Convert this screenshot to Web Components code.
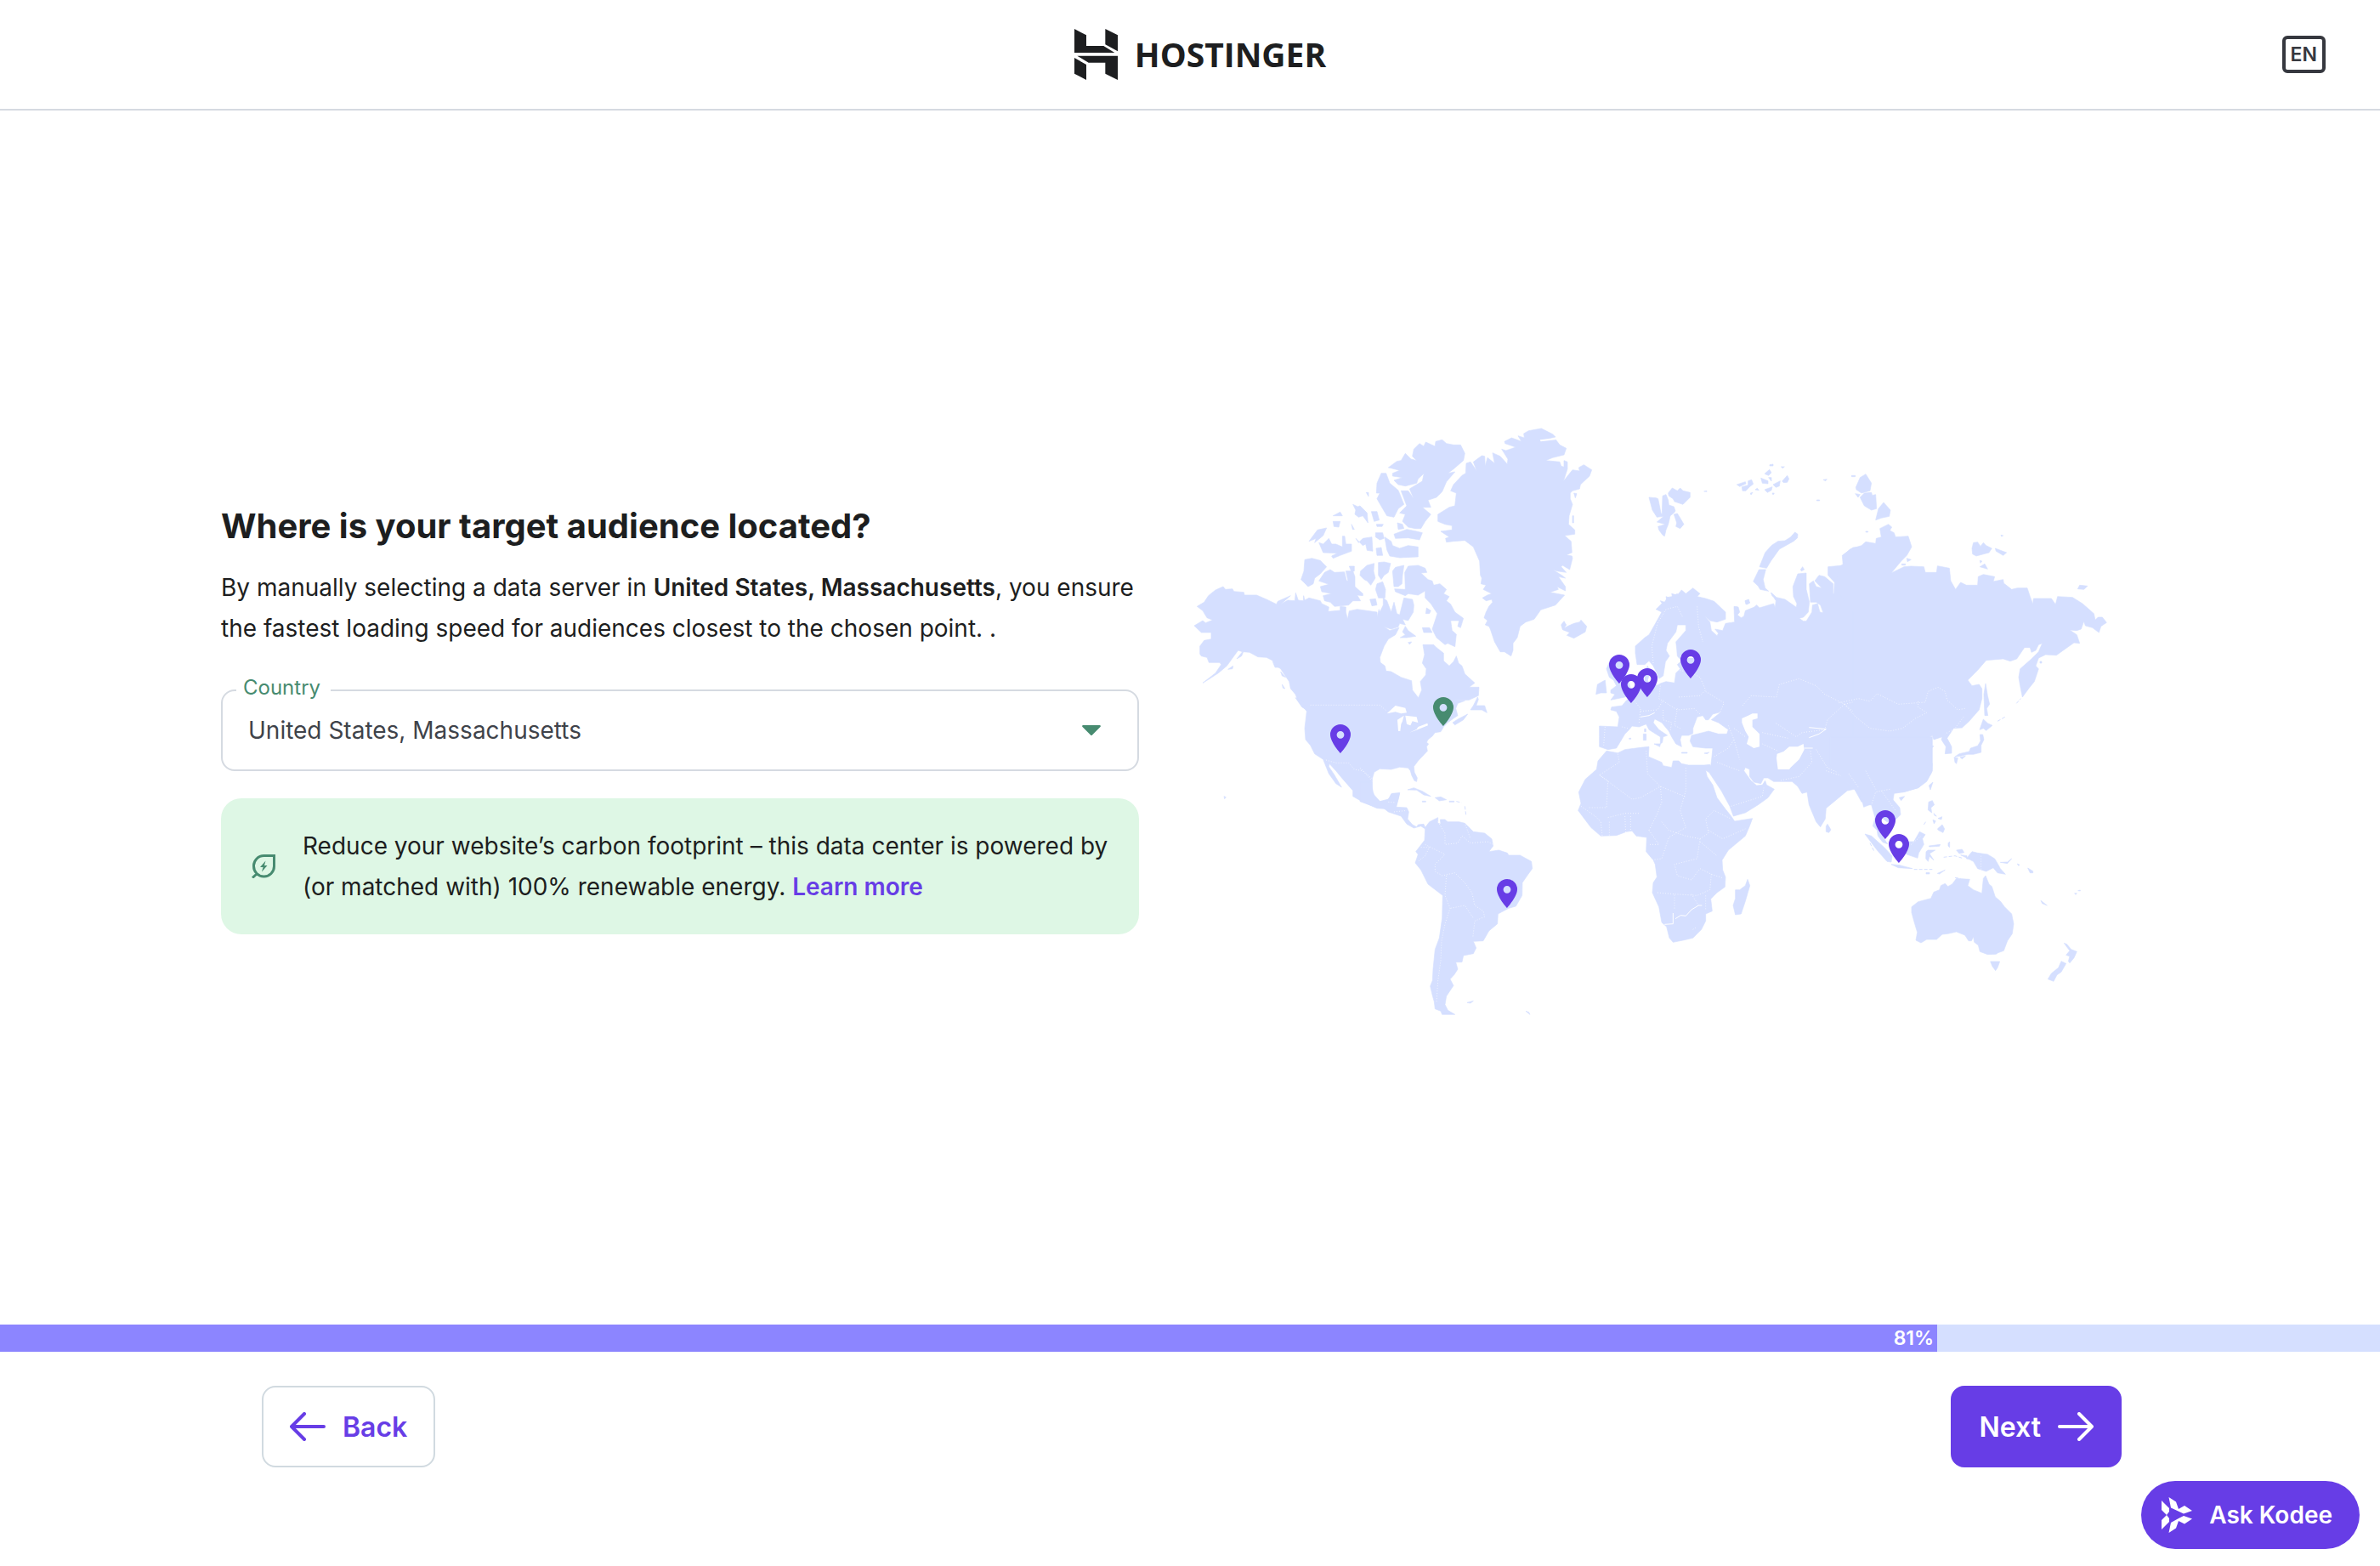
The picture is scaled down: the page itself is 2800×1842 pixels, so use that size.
<!DOCTYPE html>
<html lang="en">
<head>
<meta charset="utf-8">
<title>Hostinger</title>
<style>
  html, body { margin: 0; height: 100%; }
  body { font-family: Inter, sans-serif; color: #1d1e20; background: #fff; }
</style>
</head>
<body>
<setup-page></setup-page>

<template id="site-header">
  <style>
    :host { display: grid; grid-template-columns: 1fr auto 1fr; align-items: center; box-sizing: border-box; height: 130px; padding: 0 64px; border-bottom: 2px solid #d5dae1; }
    .logo { grid-column: 2; display: flex; align-items: center; gap: 20px; margin-left: 24px; color: #1d1e20; text-decoration: none; font: 700 39px/48px "Open Sans", sans-serif; }
    .logo svg { width: 51px; height: 60px; fill: currentColor; display: block; }
    button { justify-self: end; box-sizing: border-box; height: 44px; padding: 0 6px; border: 4px solid #36383f; border-radius: 6px; background: none; color: #36383f; font: 600 23px/36px Inter, sans-serif; }
  </style>
  <a class="logo" href="#">
    <svg viewBox="72 102 153 180" aria-hidden="true"><path d="M72 102L114 124V162H175L214 186H72zM181 102L225 124V181L181 157zM82 197H225V282L181 260V221H122zM72 204L114 228V282L72 260z"/></svg>
    <span>HOSTINGER</span>
  </a>
  <button type="button">EN</button>
</template>

<template id="country-select">
  <style>
    :host { display: block; position: relative; }
    label { position: absolute; left: 18px; top: -20px; padding: 0 12px 0 8px; background: #fff; color: #478b70; font-size: 24px; line-height: 36px; }
    select { display: block; width: 100%; height: 96px; box-sizing: border-box; appearance: none; border: 2px solid #d5dae1; border-radius: 16px; padding: 0 80px 0 30px; background: none; color: #3f434a; font: inherit; font-size: 28px; }
    svg { position: absolute; right: 45px; top: 42px; width: 22px; height: 12px; fill: #478b70; pointer-events: none; }
  </style>
  <label for="country">Country</label>
  <select id="country"><option>United States, Massachusetts</option></select>
  <svg viewBox="0 0 22 12" aria-hidden="true"><path d="M1 0H21Q22.500 .8 21.500 2L12 11.500Q11 12.500 10 11.500L.5 2Q-.5 .8 1 0z"/></svg>
</template>

<template id="eco-note">
  <style>
    :host { display: flex; align-items: center; gap: 32px; padding: 32px 24px 32px 36px; border-radius: 24px; background: #def7e5; font-size: 28px; line-height: 48px; }
    svg { flex: none; width: 28px; height: 28px; fill: none; stroke: #478b70; stroke-width: 3; }
    ::slotted(a) { color: #673de6; font-weight: 600; text-decoration: none; }
  </style>
  <svg viewBox="0 0 28 28" aria-hidden="true"><path d="M26.500 1.500V14A12 12 0 0 1 14.500 26A12 12 0 0 1 2.500 14A12 12 0 0 1 14.500 1.500zM1 27.500L6.500 22.500"/><path d="M16.500 7.500L10 15H13.500L12 20.500L18.500 13H15z" fill="#478b70" stroke="none"/></svg>
  <div><slot></slot></div>
</template>

<template id="audience-form">
  <style>
    :host { display: flex; flex-direction: column; }
    h1 { margin: 0 0 18px; font-size: 40px; line-height: 60px; font-weight: 700; }
    p { margin: 0 0 48px; font-size: 28px; line-height: 48px; }
    b { font-weight: 600; }
    country-select { margin-bottom: 32px; }
  </style>
  <h1>Where is your target audience located?</h1>
  <p>By manually selecting a data server in <b>United States, Massachusetts</b>, you ensure the fastest loading speed for audiences closest to the chosen point. .</p>
  <country-select></country-select>
  <eco-note>Reduce your website’s carbon footprint – this data center is powered by (or matched with) 100% renewable energy. <a href="#">Learn more</a></eco-note>
</template>

<template id="map-pin">
  <style>
    :host { position: absolute; transform: translate(-50%, -100%); color: #673de6; }
    :host([selected]) { color: #478b70; }
    button { display: block; padding: 0; border: 0; background: none; color: inherit; }
    svg { display: block; width: 24px; height: 34px; fill: currentColor; }
  </style>
  <button type="button"><svg viewBox="0 0 24 34" aria-hidden="true"><path fill-rule="evenodd" d="M12 0A12 12 0 0 0 0 12C0 21 12 34 12 34S24 21 24 12A12 12 0 0 0 12 0zM12 7.900A4.400 4.400 0 1 1 12 16.700A4.400 4.400 0 1 1 12 7.900z"/></svg></button>
</template>

<template id="world-map">
  <style>
    :host { display: block; position: relative; }
    .map { display: block; width: 100%; height: auto; }
    .land { fill: #d5dfff; stroke: #d5dfff; stroke-width: 2; stroke-linejoin: round; }
    .water { fill: #fff; stroke: none; }
    .river { fill: none; stroke: #fff; stroke-width: 3; }
    .border { fill: none; stroke: #fff; stroke-width: 2; stroke-dasharray: 3 6; }
    .chain { fill: none; stroke-width: 3; stroke-dasharray: 12 6; }
  </style>
  <svg class="map" viewBox="1400 500 1080 700" role="img">
    <!-- North America and Greenland -->
    <g class="land" transform="translate(1390 490) scale(.33333)">
      <path d="M55 670L80 655L95 632L120 612L147 600L155 610L180 608L185 617L220 620L222 630L265 630L300 645L335 662L340 652L385 632L350 662L375 648L400 650L403 622L412 648L430 650L431 632L435 648L450 640L490 650L495 660L520 672L518 688L560 684L560 670L580 672L580 690L586 715L592 686L620 680L690 690L690 708L697 680L700 690L712 665L712 640L725 650L740 690L750 655L760 695L770 700L785 640L815 645L820 665L818 690L800 720L780 715L790 735L770 730L765 742L740 750L715 742L735 755L768 745L755 770L730 785L715 810L700 850L702 868L718 880L722 898L740 900L775 920L812 932L815 965L836 992L848 965L843 935L862 912L864 890L850 870L858 840L852 805L890 805L900 815L925 835L925 862L945 880L960 865L970 845L978 870L990 880L1000 908L1035 940L1015 955L1050 955L1048 985L1015 1000L960 1001L1000 1003L975 1012L968 1030L975 1055L960 1065L940 1080L925 1095L915 1112L895 1115L885 1128L870 1140L865 1150L872 1155L865 1165L868 1180L835 1215L820 1235L822 1255L832 1275L830 1288L822 1285L812 1265L808 1250L800 1240L770 1237L740 1245L700 1243L680 1255L674 1275L672 1310L680 1340L700 1358L730 1350L742 1330L770 1328L765 1350L755 1380L735 1385L690 1382L640 1360L605 1340L605 1320L570 1280L545 1250L522 1225L520 1235L540 1265L565 1308L545 1295L520 1260L500 1210L470 1190L455 1160L438 1140L435 1100L442 1040L410 1000L402 980L385 960L380 935L370 920L350 890L335 880L320 860L300 850L270 848L240 832L218 830L212 845L195 855L215 830L200 825L185 845L160 880L130 905L95 928L75 940L120 905L140 875L135 868L97 868L90 850L70 845L65 838L65 810L80 790L105 785L105 762L70 762L45 738L75 720L85 728L110 718L90 710L75 685z"/>
      <path d="M435 505L460 500L490 508L512 530L490 555L470 570L465 590L447 600L422 575L432 545zM485 580L505 550L525 540L540 550L575 548L583 580L588 580L580 545L605 545L612 565L612 600L640 625L640 632L620 630L632 650L605 650L590 665L540 670L525 655L505 650L500 632L530 625L495 618L490 600L520 592zM592 528H610V545L600 548zM632 545L655 525L680 518L678 545L684 570L668 595L655 580L645 575L630 560zM695 515L715 513L738 518L730 550L715 560L705 575L695 560zM690 590L710 583L720 610L718 640L695 640L685 610zM665 645L685 643L690 665L672 668zM745 545L755 532L785 525L780 560L778 590L765 600L750 600zM788 550L800 528L835 525L860 535L866 550L845 552L870 575L885 580L890 595L912 590L935 610L925 625L945 635L935 650L950 662L965 690L995 712L985 745L975 740L980 720L950 720L955 755L970 768L965 812L940 800L930 805L900 780L885 750L895 720L903 695L880 660L860 640L860 615L835 630L800 625L790 632L755 618L752 608L790 610zM780 760L790 740L800 755L827 775L795 780L772 780L790 770zM865 675L880 685L875 695L862 695zM850 745H875L885 762L855 762zM800 797L812 795L805 804z"/>
      <path d="M717 425L740 440L745 455L770 465L800 455L835 460V495L770 498L735 492L725 470zM750 415L795 398L830 405L850 410L840 435L800 428L755 430zM730 180L760 158L775 155L790 130L810 150L830 155L815 140L820 115L840 95L855 105L862 90L895 105L897 88L920 82L935 95L960 100L985 100L1000 130L995 155L960 185L940 200L965 195L935 230L920 265L900 285L870 295L880 320L850 320L880 345L860 370L845 395L825 395L800 390L780 370L790 345L770 340L785 325L795 315L775 262L800 262L820 290L805 255L850 228L856 200L835 220L830 235L790 245L765 240L750 225L780 215L745 210L745 200L770 190L740 182zM690 235L705 200L722 200L735 235L765 260L785 310L765 325L750 355L725 350L710 325L690 290L700 270L688 270zM605 310L622 318L630 315L655 340L658 375L640 350L625 355L612 345L615 330zM670 335H690L698 365L680 370zM535 350L560 337L568 350zM535 370H560L555 390L538 388zM450 440L480 400L512 393L500 420L470 445L475 430zM485 445L500 450L520 430L530 450L545 450L568 460L568 422L576 422L580 450L600 450V475L560 490L535 500L530 492L550 482L500 480zM615 430L625 445L640 430L672 425L675 475L655 472L650 450L640 455zM685 410H710L715 430L700 435L685 425zM687 465L705 462L710 490H690zM688 380L712 380L708 388H690zM762 375L780 380L785 395L765 398zM600 380L610 398L604 398zM652 268H660V282z"/>
      <path d="M905 345L945 320L965 315L970 270L950 262L960 240L990 208L1003 200L1005 165L1020 160L1042 192L1030 160L1060 138L1070 140L1072 175L1080 145L1105 165L1098 128L1125 140L1150 168L1152 150L1130 115L1145 120L1180 108L1142 95L1140 88L1165 75L1200 88L1188 68L1210 75L1208 60L1225 50L1270 42L1310 62L1320 72L1265 85L1320 80L1335 100L1358 112L1350 135L1310 145L1285 155L1335 160L1340 175L1350 178L1350 155L1362 160L1362 185L1348 228L1380 188L1405 192L1402 180L1420 170L1448 188L1440 210L1408 240L1405 255L1380 262L1372 270L1372 290L1380 310L1368 350L1366 380L1388 400V415L1352 420L1375 440L1378 480L1358 488L1378 492L1380 500L1370 540L1345 525L1340 530L1358 550L1325 545L1310 540L1345 562L1355 570L1330 565L1355 600L1355 615L1325 600L1330 610L1300 620L1352 630L1320 665L1268 682L1245 715L1215 725L1195 740L1185 780L1170 800L1170 825L1163 845L1140 830L1125 830L1105 795L1090 750L1085 740L1072 735L1080 720L1068 710L1075 690L1085 670L1098 655L1095 645L1075 650L1062 640L1080 630L1095 625L1065 610L1075 595L1057 590L1060 570L1055 560L1052 510L1030 460L1000 437L960 440L935 443L932 430L945 425L915 405L955 400L955 385L930 380L905 370zM1340 735L1350 722L1358 735L1350 748L1362 740L1385 730L1405 725L1410 718L1430 740L1425 760L1385 782L1360 772L1370 762L1345 752zM1385 270L1395 272L1390 287zM1380 350H1384V375H1380z"/>
      <path d="M1020 1035L1030 1020L1045 990L1048 998L1040 1020L1070 1020L1078 1045L1060 1035zM957 1080L975 1068L1010 1050L995 1070L965 1088zM402 992L430 1005L450 1040L425 1025zM164 892L182 880L180 890zM798 1317L820 1310L850 1322L880 1340L855 1335L830 1318zM150 1340L157 1343L152 1349zM322 865L345 885L330 885zM350 900L368 920L355 915zM355 945L365 960L358 958z"/>
      <path class="water" d="M725 1048L755 1020L790 1028L795 1045L775 1048L755 1042zM762 1070L785 1055L780 1075L775 1085L772 1110L765 1110zM790 1055L830 1060L835 1080L815 1075L808 1090L795 1085zM805 1115L830 1103L835 1095L868 1082L870 1090L840 1102L825 1108zM1265 82L1320 76V82L1268 88z"/>
      <path class="border" d="M455 1018H700L725 1040M510 1212L545 1222L590 1222L610 1245L640 1250L672 1285"/>
    </g>
    <!-- Central and South America -->
    <g class="land" transform="translate(1600 820) scale(.33333)">
      <path d="M0 300L42 300L45 335L50 345L70 368L95 365L105 355L110 342L140 338L135 360L128 388L165 390L172 405L168 430L185 450L200 458L205 450L225 448L230 460L245 440L275 425L275 445L285 448L283 432L300 432L310 440L350 440L370 445L400 475L440 480L465 500L470 525L455 545L490 540L520 550L525 558L565 558L605 580L608 605L590 630L573 655L572 700L550 738L525 745L487 765L485 800L455 825L435 860L400 862L410 885L400 905L365 912L360 935L338 935L345 960L332 980L318 995L330 1018L305 1055L300 1085L310 1105L335 1120L290 1120L285 1108L265 1100L262 1075L255 1050L248 1020L256 1000L258 960L265 890L280 850L290 780L292 700L240 660L215 610L195 585L205 555L197 545L228 505L230 465L215 455L190 462L165 448L145 420L100 405L75 385L55 388L0 368z"/>
      <path d="M378 1078L400 1072L390 1080zM585 1108L596 1112L600 1120zM265 355L285 352L305 362L280 366zM220 367H232V370H220zM315 367H332V370H315z"/>
      <path class="chain" d="M340 368L358 372M370 385L374 415"/>
      <path class="border" d="M275 440L300 480L300 520L345 515L360 490L390 515L450 510L470 520M372 450L390 500M215 530L245 530L230 560L205 580M230 520L300 555L265 590L265 615L290 630L335 620L370 655L395 690L405 735L435 755L440 775L405 790L398 850M305 630L300 700L318 745L300 800L288 860L285 930L275 1000L270 1080M320 745L370 735L400 780M100 370L125 372M120 405L165 400M0 250L45 290"/>
    </g>
    <!-- Africa, Europe and Western Asia -->
    <g class="land" transform="translate(1840 700) scale(.33333)">
      <path d="M150 550L190 557L215 545L270 538L300 535L298 570L345 590L350 602L380 608L385 585L405 585L415 595L440 600L495 600L515 598L520 605L515 628L500 618L505 640L525 670L540 715L570 755L590 780L602 798L665 788L655 815L640 850L580 900L558 935L560 970L570 995L568 1030L540 1050L518 1072L523 1115L500 1125L500 1150L485 1180L455 1210L420 1218L385 1225L372 1210L362 1170L345 1155L335 1100L312 1050L315 1015L328 995L322 950L315 935L290 905L292 855L255 850L240 832L220 835L185 848L130 850L95 820L65 780L50 760L60 735L52 695L75 650L115 615L120 585zM605 1040L620 1040L640 1025L648 1003L656 1025L640 1080L625 1125L605 1128L597 1095L605 1070z"/>
      <path d="M125 462L190 465L195 430L185 410L165 405L168 395L205 390L220 372L245 355L265 335L285 320L285 270L295 250L305 270L295 300L300 312L330 318L340 312L360 305L390 310L395 275L410 260L400 245L415 232L400 215L398 190L395 165L430 125L430 105L400 105L395 130L365 170L360 195L372 215L358 235L350 285L335 295L328 275L315 250L300 232L285 245L258 245L252 205L252 180L285 150L300 140L320 105L345 60L325 50L350 35L340 20L365 28L360 5L385 15L380 -5L400 0L415 -18L430 -5L455 -25L480 -5L470 5L500 12L530 22L570 60L570 85L540 95L515 90L495 72L515 95L520 125L540 143L545 135L533 120L560 125L570 100L602 95L600 40L615 42L620 60L612 70L625 80L635 75L640 55L670 43L680 35L690 45L740 30L745 45L748 20L730 -8L750 8L780 15L820 43L822 30L810 5L808 -30L825 -75L855 -78V-20L866 25L862 60L845 78L830 82L845 92L855 92L875 60L877 35L895 30L903 60L915 62L905 35L890 25L870 25L866 -40L880 -50L890 -30L910 -25L885 -50L900 -70L920 -65L950 -40V-5H953L955 -45L932 -70L932 -100L985 -105L982 -140L1020 -168L1090 -175L1110 600L1090 735L1058 748L1050 715L1025 685L1000 690L925 752L922 790L905 818L890 800L865 740L858 695L840 700L825 675L805 658L740 658L720 645L705 645L695 665L670 660L655 640L655 615L640 608L635 620L660 655L680 672L700 670L710 655L715 670L742 685L720 715L685 740L640 768L598 780L585 745L555 690L515 630L522 570L525 540L500 540L455 535L445 515L450 495L490 485L510 480L545 490L575 490L580 475L545 450L520 440L555 412L525 420L510 440L500 440L490 425L470 430L455 470L455 488L440 495L415 495L410 510L415 535L395 525L380 500L370 480L345 450L320 437L315 450L335 475L365 495L350 500L347 520L340 525L340 500L300 475L290 455L265 465L240 462L230 475L215 490L200 515L185 540L155 545L125 535L125 500z"/>
      <path d="M165 335L185 320L175 300L160 290L150 260L165 225L200 220L205 240L215 270L230 310L238 345L215 360L165 370L180 350L165 345zM113 350L118 315L145 300L150 345L130 345zM280 490H290V512H280zM284 472H289V482H284zM318 525L340 525L338 535zM415 555H435V558H415zM495 558L512 555L505 560zM925 815L930 808L942 828L935 838L925 835zM640 20L652 15L655 28L645 33zM602 42H612V65L604 62zM230 505H236V508H230z"/>
      <path class="water" d="M628 435L650 425L665 418H683V435L665 440L665 465L690 490V535L670 540L645 525L652 500L640 480L628 450zM752 560L775 552L795 535L825 535L845 525L848 545L830 580L800 608L795 615L755 615L750 575zM410 230L440 222L470 222L470 214L412 214z"/>
      <path class="river" d="M355 1162L385 1160V1122M393 1142L412 1130L430 1132L450 1110L475 1095H487M865 467L925 473L900 490L865 503M848 540H878M270 430L300 425L320 415"/>
      <path class="border" d="M190 560L195 590L125 635L240 720L270 715L340 675L430 712M125 635L155 655L150 750L85 750M290 550L295 630L340 675L345 730L330 770L300 830M430 610V690L410 760L430 820M60 745L110 780L130 800L135 850M155 785L215 770L270 770M160 800L160 848M215 780L218 840M235 780L235 830M300 830L335 880L300 880M430 820L370 855L345 930L310 935M345 800L370 830L430 850L480 860L510 840L500 790L530 760L590 790M510 830L560 860L640 825M480 860L470 930L390 950L400 990L450 1005L480 965L520 985L560 998M520 985L515 1040L470 1060L390 1055M330 1050L390 1055L390 1110M450 1055L475 1095M455 1180L470 1170M500 1060V1110M480 870L540 920"/>
      <path class="border" d="M315 240L310 180L330 100L360 50L400 40L420 80M470 40L475 110L490 165M400 265L440 270L480 290L500 335L480 355L400 360M340 320L335 365L400 405L460 400L480 420M500 340L565 380L550 415M205 465L225 470M145 465L140 530M265 450L270 400L250 375M270 410L330 405L350 370M350 405L350 440L380 450L375 480M400 400L390 460L410 470M630 390L660 355L750 360L760 315L830 295L890 320L920 350L990 385L930 440L920 475L840 485L820 500L745 450M990 385L1050 370L1080 378M990 385L1080 460M580 460L600 510L620 580M540 590L620 620M530 570L580 540L600 510M600 470L640 500M700 485L790 505M700 525L755 550M870 550L875 590L830 640L760 655M890 545L930 610L1000 640L1050 630M590 745L700 710L705 680M1000 640L1030 680"/>
    </g>
    <!-- Siberia and the Far East -->
    <g class="land" transform="translate(2080 520) scale(.33333)">
      <path d="M250 440L268 430L265 400L290 378L330 365L345 352L380 358L382 340L400 335L395 305L425 290L437 300L430 312L445 320L450 335L495 332L507 370L490 400L470 420L435 462L480 440L505 438L550 440L555 460L595 460L598 437L640 445L645 490L662 520L680 495L700 505L740 505L742 475L760 467L800 475L795 492L830 485L832 498L860 520L880 515L915 515L925 545L935 572L937 552L1000 552L1015 573L1022 545L1075 548L1110 570L1150 605L1155 628L1165 618H1180L1195 637L1175 650L1168 672L1145 655L1120 648L1115 632L1105 660L1090 665L1065 663L1090 680L1100 710L1080 708L1018 752L980 750L955 762L945 790L955 800L940 845L920 870L898 900L890 860L885 830L890 800L930 765L955 740L968 710L955 715L945 735L930 742L925 725L905 725L878 765L855 773L830 765L770 770L740 805L705 840L720 860L745 855L755 870L755 905L745 945L710 985L685 1008L655 1010L632 1045L648 1075V1098L625 1100L628 1075L612 1050L615 1040L585 1050L580 1035L545 1057L560 1068L585 1073L560 1095L580 1135L578 1165L560 1195L530 1220L475 1235L445 1240L440 1270L330 1270L300 1215V600L240 520z"/>
      <path d="M310 160L325 125L345 113L365 145L360 172L330 180L312 168zM325 195L340 180L365 178L368 188L380 185L383 235L365 240L340 225zM308 182L325 185L318 195zM380 275L390 235L408 213L432 240L428 262L400 268zM720 375L725 355L740 353L750 368L760 355L770 365L790 375L780 390L735 402L722 395zM802 375L842 390L830 400L805 385zM748 440L765 430L775 448zM748 418L755 420L750 427zM1093 518L1100 505L1128 508L1115 520zM490 410L505 415L492 422zM472 430H485V434H472zM295 118H308V122H295zM195 133L208 131L203 137zM345 315H353V318H345zM115 450L122 440L128 450L118 455zM822 328L830 330L824 333zM960 774H966V780H960zM172 204H182V207H172z"/>
      <path class="border" d="M250 920L320 905L360 915L385 888L460 925L555 918L565 880L600 865L625 880L632 910L670 945L695 940M270 925L310 970L360 1010L430 1020L475 1010L520 975L560 955L530 935L530 915M690 970L660 1010L625 1030M205 1160L280 1185L310 1195M345 1160L375 1200L380 1240"/>
    </g>
    <!-- Arctic islands -->
    <g class="land" transform="translate(1880 520) scale(.33333)">
      <path d="M180 195L205 197L212 200L222 250L226 255L228 190L240 185L248 205L250 222L268 228L273 243L268 250L255 260L248 290L240 310L235 332L228 328L215 310L212 298L238 290L208 282L232 262L208 265L192 240zM248 180L262 162L280 172L290 162L300 172L325 178L325 195L300 220L270 210L265 200L250 190zM268 255L280 252L290 268L303 290L290 305L275 298L278 285zM490 150L520 140L522 147L500 157zM530 137L542 133L548 148L535 158L522 172L510 172L508 158L530 152zM575 127L600 137L600 147L580 145zM588 112L605 97L612 108L602 118zM602 125L612 125V138zM618 150L643 137L640 155L628 160zM650 138L668 118L674 130L668 142L655 143zM588 168L615 158L612 170L598 178zM606 80L618 78V84H606zM646 87L658 87L652 92zM555 168L562 163L568 170zM538 180L546 178L540 186zM615 180L622 180L618 186zM570 440L590 390L612 365L635 350L660 348L680 335L695 318L705 325L704 338L690 350L640 378L610 420L595 445zM568 450L592 450L583 485L590 515L602 526L572 520L565 508L548 492zM519 560L530 557L536 567L522 573zM612 532L628 548L615 543zM205 590L225 570L235 565L245 548L260 545L280 535L285 545L225 585zM374 174L384 172V175z"/>
    </g>
    <!-- South East Asia and Oceania -->
    <g class="land" transform="translate(2120 800) scale(.33333)">
      <path d="M100 200H460V320L440 358L410 380L360 395L325 397L315 415L345 450L348 475L330 492L300 500L275 480L262 480L270 530L290 560L302 578L285 572L268 550L265 530L250 515L258 485L245 440L230 440L218 445L215 425L190 385L180 380L100 300zM222 543L245 550L290 590L318 620L315 642L300 640L265 600zM315 650L345 653L390 665L340 662zM350 600L375 570L395 570L415 535L435 545L425 560L430 580L412 610L408 628L370 615zM438 605L445 600L470 600L450 612L465 635L450 622L445 640L437 630zM448 585L488 580L485 586L450 588zM580 630L600 605L620 610L655 615L680 630L692 650L700 665L718 685L690 680L675 662L650 675L620 665L605 640L590 632zM545 600L565 597L572 608L555 612zM560 617L582 620V628zM700 643L725 642L740 630L725 647zM478 682L505 670L485 684zM438 679H450V684H438zM447 430L460 425L467 440L455 450L458 468L445 458zM478 525L495 510L503 525L498 538L482 530zM465 470L475 480L468 478zM480 488L494 482L492 492zM462 493L472 497L466 507zM343 415L362 410L350 425zM448 372L462 360L453 387zM516 575L521 570V590L516 585z"/>
      <path d="M537 272L550 275L545 295L540 290zM540 270L555 260L590 252L595 240L620 232L630 215L628 192L638 192L642 210L632 230V255L605 262L585 262L560 268zM558 272L577 268L565 278zM640 138L655 152L672 160L650 178L640 170L627 175zM648 12L655 55L662 85L652 100L656 125L645 125L642 50zM387 800L410 782L455 770L465 748L485 740L490 725L505 718L515 728L530 720L545 700L592 703L585 725L605 740L635 752L640 700L648 690L660 720L670 728L682 765L700 780L715 800L740 825L747 860L742 895L725 920L712 955L692 962L685 967L655 968L628 958L622 935L608 925L605 905L598 920L588 920L575 900L545 888L515 895L495 897L475 915L440 915L420 927L402 918L407 890L395 850L387 820zM665 993H698L690 1015L683 1025L672 1010zM925 928L935 932L950 950L970 958L960 980L945 998L940 992L945 975L932 970L945 955L935 942zM915 992L932 1000L915 1030L900 1040L888 1063L868 1055L880 1035L905 1015zM843 778L865 795L848 788zM962 752H970L966 757zM974 743L982 741V744zM760 648L768 652L764 655zM797 663L815 674V680L805 680z"/>
      <path class="chain" d="M690 145L720 128M757 82L772 65M395 668H460M500 625L540 620L565 628M540 697L560 700M240 575L255 605M430 510L440 495"/>
      <path class="border" d="M632 620V672M385 580L420 550M310 385L260 395L245 440M280 390L330 460M165 330L200 380M225 320L260 385"/>
    </g>
  </svg>
  <map-pin style="left:27.600%;top:50.600%" selected></map-pin>
  <map-pin style="left:16.400%;top:55.100%"></map-pin>
  <map-pin style="left:34.500%;top:81.100%"></map-pin>
  <map-pin style="left:46.800%;top:43.400%"></map-pin>
  <map-pin style="left:49.800%;top:45.700%"></map-pin>
  <map-pin style="left:48.100%;top:46.700%"></map-pin>
  <map-pin style="left:54.500%;top:42.600%"></map-pin>
  <map-pin style="left:75.700%;top:69.500%"></map-pin>
  <map-pin style="left:77.200%;top:73.500%"></map-pin>
</template>

<template id="setup-progress">
  <style>
    :host { display: flex; height: 32px; background: #d5dfff; }
    .fill { width: 81.400%; box-sizing: border-box; padding-right: 4px; background: #8c85ff; color: #fff; text-align: right; font-size: 23px; line-height: 32px; font-weight: 600; }
  </style>
  <div class="fill" role="progressbar" aria-valuenow="81" aria-valuemin="0" aria-valuemax="100">81%</div>
</template>

<template id="step-button">
  <style>
    :host { display: block; }
    button { display: flex; align-items: center; gap: 20px; box-sizing: border-box; height: 96px; padding: 0 31px; border: 2px solid #673de6; border-radius: 16px; background: #673de6; color: #fff; font: inherit; font-size: 32px; font-weight: 600; }
    svg { width: 42px; height: 34px; fill: none; stroke: currentColor; stroke-width: 4; stroke-linecap: round; stroke-linejoin: round; }
    :host([back]) button { flex-direction: row-reverse; border-color: #d1dae0; background: #fff; color: #673de6; }
    :host([back]) svg { transform: scaleX(-1); }
  </style>
  <button type="button"><slot></slot><svg viewBox="0 0 42 34" aria-hidden="true"><path d="M2 17H40M25 2L40 17L25 32"/></svg></button>
</template>

<template id="ask-kodee">
  <style>
    :host { position: fixed; right: 24px; bottom: 20px; }
    button { display: flex; align-items: center; gap: 20px; height: 80px; padding: 0 32px 0 24px; border: 0; border-radius: 40px; background: #673de6; color: #fff; font: inherit; font-size: 28px; font-weight: 600; }
    svg { width: 36px; height: 42px; fill: currentColor; }
  </style>
  <button type="button"><svg viewBox="0 0 36 42" aria-hidden="true"><path d="M0 4L9 13V17L6 21L0 15zM0 38V27L6 21L9 25V29zM8.500 0L17 5.500L20 14L27 10L36 16L26 19.500L11 12.500zM8.500 42L17 36.500L20 28L27 31.500L36 25.500L26 22L20 25L11 30z" transform="matrix(1 0 0 1 0 0)"/></svg><span>Ask Kodee</span></button>
</template>

<template id="setup-page">
  <style>
    :host { display: flex; flex-direction: column; min-height: 100%; font-family: Inter, sans-serif; }
    main { flex: 1; display: grid; align-items: center; grid-template-columns: 1fr 1fr; column-gap: 60px; box-sizing: border-box; width: 100%; max-width: 2280px; margin: 0 auto; padding-right: 60px; }
    nav { display: flex; justify-content: space-between; box-sizing: border-box; width: 100%; max-width: 2280px; margin: 0 auto; padding: 40px 44px 116px 48px; }
    world-map { margin-top: 12px; }
  </style>
  <site-header></site-header>
  <main>
    <audience-form></audience-form>
    <world-map></world-map>
  </main>
  <setup-progress></setup-progress>
  <nav>
    <step-button back>Back</step-button>
    <step-button>Next</step-button>
  </nav>
  <ask-kodee></ask-kodee>
</template>

<script>
  class TemplateElement extends HTMLElement {
    constructor() {
      super();
      this.attachShadow({ mode: "open" }).append(document.getElementById(this.localName).content.cloneNode(true));
    }
  }
  for (const { id } of document.querySelectorAll("template")) {
    customElements.define(id, class extends TemplateElement {});
  }
</script>
</body>
</html>
